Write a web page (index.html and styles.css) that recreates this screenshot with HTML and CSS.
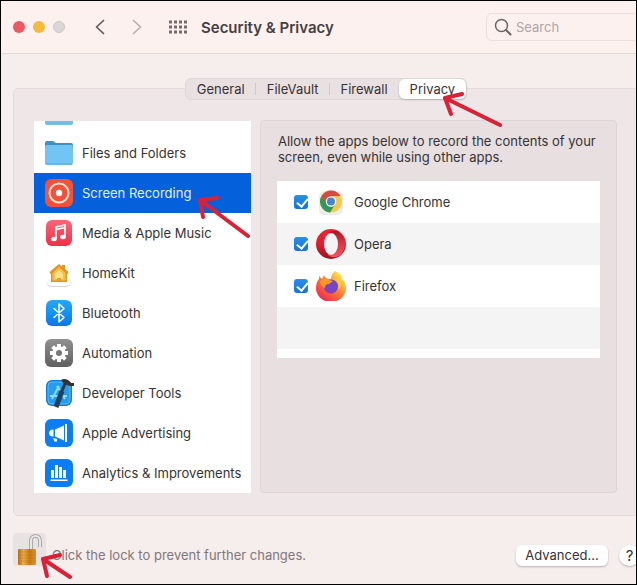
FILE: index.html
```
<!DOCTYPE html>
<html lang="en">
<head>
  <meta charset="UTF-8">
  <meta name="viewport" content="width=device-width, initial-scale=1.0">
  <title>Security &amp; Privacy</title>
  <link rel="stylesheet" href="styles.css">
</head>
<body>
  <div class="window">
    <header class="titlebar">
      <div class="lights">
        <span class="light close"></span>
        <span class="light minimize"></span>
        <span class="light disabled"></span>
      </div>
      <nav class="history">
        <button type="button" aria-label="Back">
          <svg width="10" height="16" viewBox="0 0 10 16"><path d="M8.500 1.500 1.500 8l7 6.500" fill="none" stroke="#625b5c" stroke-width="1.700" stroke-linecap="round" stroke-linejoin="round"/></svg>
        </button>
        <button type="button" aria-label="Forward">
          <svg width="10" height="16" viewBox="0 0 10 16"><path d="m1.500 1.500 7 6.500-7 6.500" fill="none" stroke="#b9b0b0" stroke-width="1.700" stroke-linecap="round" stroke-linejoin="round"/></svg>
        </button>
      </nav>
      <button class="show-all" type="button" aria-label="Show all">
        <svg width="20" height="14" viewBox="0 0 20 14"><path d="M1 2h18M1 7h18M1 12h18" fill="none" stroke="#736b6c" stroke-width="3" stroke-dasharray="3 2"/></svg>
      </button>
      <h1>Security &amp; Privacy</h1>
      <label class="search">
        <svg width="18" height="18" viewBox="0 0 18 18"><circle cx="7.500" cy="7.500" r="6" fill="none" stroke="#6b6465" stroke-width="1.500"/><path d="m12 12 4.500 4.500" stroke="#6b6465" stroke-width="2" stroke-linecap="round"/></svg>
        <input type="search" placeholder="Search" aria-label="Search">
      </label>
    </header>

    <main>
      <div class="tabs" role="tablist">
        <button type="button" role="tab">General</button>
        <button type="button" role="tab">FileVault</button>
        <button type="button" role="tab">Firewall</button>
        <button type="button" role="tab" class="active" aria-selected="true">
          Privacy
          <svg class="arrow tab-arrow" width="61" height="38" viewBox="0 0 61 38"><path d="M58 33 3 6M20 2 3 6l6 16"/></svg>
        </button>
      </div>

      <div class="group">
        <ul class="services">
          <li>
            <svg class="icon" viewBox="0 0 28 28"><path d="M0 5q0-2 2-2h6l3 2h15q2 0 2 2v4H0z" fill="#3f97c9"/><rect y="7" width="28" height="19" rx="2" fill="#70bfe9"/></svg>
          </li>
          <li>
            <svg class="icon" viewBox="0 0 28 28"><path d="M0 4q0-2 2-2h6l3 2h15q2 0 2 2v5H0z" fill="#3f91bf"/><rect y="6" width="28" height="20" rx="2" fill="#72c5f3"/><path d="M1 25h26" stroke="#57acd9"/></svg>
            Files and Folders
          </li>
          <li class="selected">
            <svg class="icon" viewBox="0 0 28 28"><rect width="28" height="28" rx="6" fill="#f4503a"/><circle cx="14" cy="14" r="9.500" fill="none" stroke="#ffe2d6" stroke-width="2"/><circle cx="14" cy="14" r="3.200" fill="#fff"/></svg>
            Screen Recording
            <svg class="arrow row-arrow" width="54" height="44" viewBox="0 0 54 44"><path d="M51 40 3 4M20 2 3 4l3 17"/></svg>
          </li>
          <li>
            <svg class="icon" viewBox="0 0 28 28"><defs><linearGradient id="music" x2="0" y2="1"><stop stop-color="#fb6679"/><stop offset="1" stop-color="#ee3048"/></linearGradient></defs><rect x="1" y="1" width="26" height="26" rx="6" fill="url(#music)"/><path d="M11 19.500V8l9-2v11.500M11 10.500l9-2" fill="none" stroke="#fff" stroke-width="1.700"/><ellipse cx="9" cy="20" rx="2.800" ry="2.200" fill="#fff"/><ellipse cx="18" cy="18" rx="2.800" ry="2.200" fill="#fff"/></svg>
            Media &amp; Apple Music
          </li>
          <li>
            <svg class="icon" viewBox="0 0 28 28"><rect x="1" y="2" width="26" height="26" rx="6" fill="#d9d6d6"/><rect x="1" y="1" width="26" height="26" rx="6" fill="#fff"/><path d="M4.500 13 14 5l3 2.500V6h3v4l3.500 3-1 2H22v8H6v-8h-.5z" fill="#e69424"/><path d="m14 8-6.500 6v7.500h13V14z" fill="#f7bf49"/><path d="m14 11-4 4v5h8v-5z" fill="#ffe38a"/><path d="M12 22v-3h4v3z" fill="#e3a038"/></svg>
            HomeKit
          </li>
          <li>
            <svg class="icon" viewBox="0 0 28 28"><defs><linearGradient id="bt" x2="0" y2="1"><stop stop-color="#25a8f7"/><stop offset="1" stop-color="#0877ee"/></linearGradient></defs><rect x="1" y="1" width="26" height="26" rx="6" fill="url(#bt)"/><path d="m9 9.500 10 9-5 4.500V5l5 4.500-10 9" fill="none" stroke="#fff" stroke-width="1.500" stroke-linejoin="round" stroke-linecap="round"/></svg>
            Bluetooth
          </li>
          <li>
            <svg class="icon" viewBox="0 0 28 28"><defs><linearGradient id="gear" x2="0" y2="1"><stop stop-color="#919191"/><stop offset="1" stop-color="#606060"/></linearGradient></defs><rect width="28" height="28" rx="6" fill="url(#gear)"/><path d="M14 5v18M5 14h18M7.600 7.600l12.800 12.800M20.400 7.600 7.600 20.400" stroke="#fff" stroke-width="4"/><circle cx="14" cy="14" r="6.700" fill="#fff"/><circle cx="14" cy="14" r="3" fill="#777"/></svg>
            Automation
          </li>
          <li>
            <svg class="icon" viewBox="0 0 28 28"><rect x="1" y="1" width="26" height="26" rx="6" fill="#167dda"/><rect x="3" y="3" width="22" height="22" rx="4" fill="#279bed" stroke="#5cbcf5"/><path d="M14 7 7 20M12 7l8 13M5 17h17" fill="none" stroke="#8ed9ff" stroke-width="2"/><path d="M20 5 16 14" stroke="#3a3330" stroke-width="3"/><path d="m17 12-6 16" stroke="#22405f" stroke-width="5"/><path d="M16 1q3-2 7 0l3 3 3 0v3l-4 0-3-1-3-1z" fill="#3a312f"/></svg>
            Developer Tools
          </li>
          <li>
            <svg class="icon" viewBox="0 0 28 28"><rect width="28" height="28" rx="6" fill="#0b7ef4"/><path d="M8.500 10.500v7H7q-3-1-3-3.500t3-3.500zM10 10.500 19 6.500v15l-9-4zM20 5h2v18h-2z" fill="#fff"/><path d="m8 19 4 1v2.500H9.500z" fill="#fff"/></svg>
            Apple Advertising
          </li>
          <li>
            <svg class="icon" viewBox="0 0 28 28"><rect width="28" height="28" rx="6" fill="#0b7ef4"/><path d="M6 11h3v8H6zM10 6h3v13h-3zM14 8h3v11h-3zM18 11h3v8h-3zM5.500 20.500h17V22h-17z" fill="#fff"/></svg>
            Analytics &amp; Improvements
          </li>
        </ul>

        <section class="panel">
          <p>Allow the apps below to record the contents of your screen, even while using other apps.</p>
          <div class="apps">
            <label>
              <input type="checkbox" checked>
              <svg class="app-icon" viewBox="0 0 30 30"><rect x="3" y="4" width="24" height="24" rx="5" fill="#ededed"/><circle cx="15" cy="14.500" r="11" fill="#f5c94d"/><path d="M5.500 9A11 11 0 0 1 24.500 9H15l-5 8z" fill="#d54b3f"/><path d="M5.500 9A11 11 0 0 0 14 25.500L19.500 17l-9 0z" fill="#34975a"/><circle cx="15" cy="14.500" r="5.200" fill="#fff"/><circle cx="15" cy="14.500" r="4" fill="#4584cf"/></svg>
              Google Chrome
            </label>
            <label>
              <input type="checkbox" checked>
              <svg class="app-icon" viewBox="0 0 30 30"><defs><linearGradient id="opera" x2="0" y2="1"><stop stop-color="#ed2634"/><stop offset="0.500" stop-color="#dc1f30"/><stop offset="1" stop-color="#98121f"/></linearGradient><linearGradient id="opera-side" x2="0" y2="1"><stop stop-color="#a81626"/><stop offset="0.450" stop-color="#d93542"/><stop offset="1" stop-color="#f4535b"/></linearGradient></defs><circle cx="15" cy="15" r="15" fill="url(#opera)"/><path d="M12 4q5-4 11-1a15 15 0 0 1 0 24q-6 3-11-1z" fill="url(#opera-side)"/><ellipse cx="15" cy="15" rx="7" ry="11" fill="#f4f4f4"/></svg>
              Opera
            </label>
            <label>
              <input type="checkbox" checked>
              <svg class="app-icon" viewBox="0 0 30 30"><defs><linearGradient id="fox" x1="1" x2="0.200" y2="1"><stop offset="0.200" stop-color="#ffd84a"/><stop offset="0.550" stop-color="#fb7b31"/><stop offset="1" stop-color="#ed2256"/></linearGradient></defs><path d="M19 0q7 3 7 8 4 3 4 9a15 14 0 0 1-30 0q0-6 3-9V5l3 3 2-4q1 3 5 4l2 0q0-5 4-8z" fill="url(#fox)"/><circle cx="15" cy="15.500" r="7" fill="#7545c4"/><path d="M4 10q5-4 9-1l4 1-4 3q-4 0-4 4-5-2-5-7z" fill="#fc9628"/><path d="M17 8q7 3 5 10 4-1 3-8-2-3-8-2z" fill="#fdc53f"/><path d="M9 18q3 4 7 2l4 0q-5 4-11 0z" fill="#8f3fb0"/></svg>
              Firefox
            </label>
            <div class="empty"></div>
          </div>
        </section>
      </div>
    </main>

    <footer>
      <button class="lock" type="button" aria-label="Lock">
        <svg width="33" height="33" viewBox="0 0 33 33"><defs><linearGradient id="brass"><stop stop-color="#b86d13"/><stop offset="0.300" stop-color="#eaad4a"/><stop offset="0.650" stop-color="#c87914"/><stop offset="1" stop-color="#dc9630"/></linearGradient></defs><path d="M18 16V8q0-5 4.500-5T27 8v6" fill="none" stroke="#969696" stroke-width="3.500"/><path d="M18 16V8q0-5 4.500-5T27 8v6" fill="none" stroke="#e8e8e8" stroke-width="2"/><rect x="5" y="16" width="18" height="16" rx="1" fill="url(#brass)"/><path d="M5 19h18M5 22h18M5 25h18M5 28h18" stroke="#a7640f" stroke-opacity="0.300"/></svg>
        <svg class="arrow lock-arrow" width="34" height="28" viewBox="0 0 34 28"><path d="M30 24 3 6M20 2 3 6l4 17"/></svg>
      </button>
      <span class="hint">Click the lock to prevent further changes.</span>
      <button class="advanced" type="button">Advanced...</button>
      <button class="help" type="button" aria-label="Help">?</button>
    </footer>
  </div>
</body>
</html>
```
FILE: styles.css
```
* {
  box-sizing: border-box;
}
body {
  margin: 0;
  font-family: Inter, sans-serif;
  font-size: 13px;
  color: #373233;
}
button, input {
  font: inherit;
  color: inherit;
}
button {
  margin: 0;
  padding: 0;
  border: none;
  background: none;
}
svg {
  display: block;
  flex-shrink: 0;
}
.window {
  display: flex;
  flex-direction: column;
  height: 100vh;
  overflow: hidden;
  border: 1px solid #000;
  background-color: #f6eded;
}

/* Title bar */
.titlebar {
  display: flex;
  align-items: center;
  height: 53px;
  flex-shrink: 0;
  padding-left: 12px;
  background-color: #fdf1f0;
  border-bottom: 1px solid #e2d8d8;
}
.lights {
  display: flex;
  gap: 8px;
}
.light {
  width: 12px;
  height: 12px;
  border-radius: 50%;
}
.close {
  background-color: #ee5860;
}
.minimize {
  background-color: #f5b93c;
}
.disabled {
  background-color: #dbd5d5;
  border: 1px solid #cfc8c8;
}
.history {
  display: flex;
  gap: 27px;
  margin-left: 30px;
}
.show-all {
  margin-left: 26px;
}
h1 {
  margin: 0 0 0 13px;
  font-size: 15px;
  font-weight: 600;
  white-space: nowrap;
  color: #453f40;
}
.search {
  display: flex;
  align-items: center;
  gap: 4px;
  width: 160px;
  height: 28px;
  flex-shrink: 0;
  margin-left: auto;
  margin-right: -10px;
  padding-left: 7px;
  border: 1px solid #eadfdf;
  border-radius: 6px;
}
.search input {
  width: 100px;
  padding: 0;
  border: none;
  outline: none;
  background: none;
}
.search input::placeholder {
  color: #aea5a5;
}

/* Tabs and the box below them run past the right edge of the window */
main {
  display: flex;
  flex-direction: column;
  flex: 1;
  min-height: 0;
  padding: 24px 0 0 12px;
  margin-right: -3px;
}
.tabs {
  display: flex;
  align-self: center;
  height: 22px;
  margin-bottom: -12px;
  border: 1px solid #e0d7d8;
  border-radius: 6px;
  background-color: #e9e0e1;
  z-index: 1;
}
.tabs button {
  position: relative;
  padding: 0 11px;
}
.tabs button:nth-child(-n+2)::after {
  content: "";
  position: absolute;
  top: 4px;
  right: 0;
  width: 1px;
  height: 12px;
  background-color: #d1c8c9;
}
.tabs .active {
  border-radius: 6px;
  background-color: #fff;
  box-shadow: 0 1px 2px rgba(0, 0, 0, 0.2);
}
.group {
  display: flex;
  gap: 9px;
  flex: 1;
  min-height: 0;
  padding: 32px 21px 22px 20px;
  border: 1px solid #e5dbdc;
  border-radius: 5px;
  background-color: #efe6e7;
}

/* Services list, scrolled to its end */
.services {
  display: flex;
  flex-direction: column;
  justify-content: flex-end;
  width: 217px;
  flex-shrink: 0;
  margin: 0;
  padding: 0;
  overflow: hidden;
  list-style: none;
  background-color: #fff;
}
.services li {
  position: relative;
  display: flex;
  align-items: center;
  gap: 9px;
  height: 40px;
  flex-shrink: 0;
  padding-left: 11px;
  white-space: nowrap;
}
.services .selected {
  background-color: #0560dc;
  color: #e4f0ff;
  z-index: 1;
}
.icon {
  width: 28px;
  height: 28px;
  overflow: visible;
}

/* Privacy panel */
.panel {
  flex: 1;
  margin-top: -1px;
  padding: 12px 16px;
  border: 1px solid #dfd5d6;
  border-radius: 4px;
  background-color: #e7dfe0;
}
.panel p {
  margin: 0 0 16px 1px;
  line-height: 16px;
}
.apps {
  padding-bottom: 9px;
  background-color: #fff;
}
.apps label, .empty {
  display: flex;
  align-items: center;
  height: 42px;
  padding-left: 17px;
}
.apps > :nth-child(even) {
  background-color: #f4f4f4;
}
.apps input {
  appearance: none;
  width: 14px;
  height: 14px;
  margin: 0 8px 0 0;
  border-radius: 3px;
  background: linear-gradient(#2b8fec, #1272dc);
}
.apps input:checked::before {
  content: "";
  display: block;
  width: 5px;
  height: 9px;
  margin: 1px 0 0 5px;
  border: solid #fff;
  border-width: 0 2px 2px 0;
  transform: rotate(40deg);
}
.app-icon {
  width: 30px;
  height: 30px;
  margin-right: 8px;
}

/* Footer */
footer {
  display: flex;
  align-items: center;
  height: 68px;
  flex-shrink: 0;
  padding: 10px 0 0 12px;
}
.lock {
  position: relative;
  align-self: flex-start;
  margin-top: 7px;
  border-radius: 4px;
  background-color: #e9e2e2;
}
.hint {
  margin-left: 6px;
  color: #807879;
  white-space: nowrap;
}
.advanced, .help {
  height: 21px;
  flex-shrink: 0;
  background-color: #fff;
  box-shadow: 0 1px 2px rgba(0, 0, 0, 0.25);
}
.advanced {
  width: 92px;
  margin-left: auto;
  border-radius: 6px;
}
.help {
  width: 21px;
  margin: 0 -4px 0 11px;
  border-radius: 50%;
  font-size: 15px;
}

/* Red pointers drawn over the controls */
.arrow {
  position: absolute;
  fill: none;
  stroke: #dc2136;
  stroke-width: 4;
  stroke-linecap: round;
  stroke-linejoin: round;
  pointer-events: none;
}
.tab-arrow {
  left: 43px;
  top: 13px;
}
.row-arrow {
  left: 163px;
  top: 23px;
}
.lock-arrow {
  left: 27px;
  top: 20px;
}
```
